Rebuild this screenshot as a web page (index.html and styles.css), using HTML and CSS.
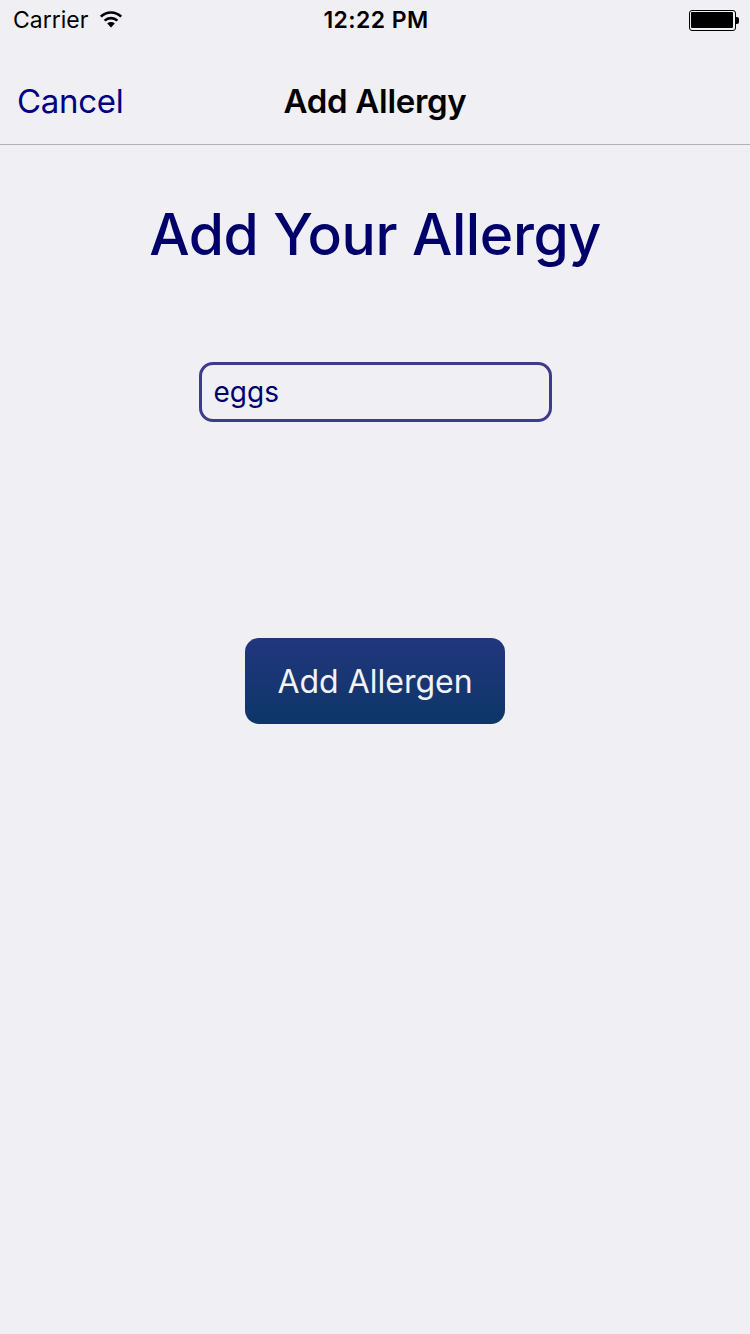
FILE: index.html
```html
<!DOCTYPE html>
<html>
<head>
<meta charset="utf-8">
<link rel="stylesheet" href="styles.css">
</head>
<body>
<div class="screen">
  <div class="status">
    <div class="status-left">
      <span class="carrier">Carrier</span>
      <svg class="wifi" width="24" height="18" viewBox="0 0 24 18">
        <path d="M12 17.5 L8.2 13.4 A5.6 5.6 0 0 1 15.8 13.4 Z" fill="#000"/>
        <path d="M5.6 10.6 A9.4 9.4 0 0 1 18.4 10.6" fill="none" stroke="#000" stroke-width="2.6"/>
        <path d="M1.8 6.6 A14.6 14.6 0 0 1 22.2 6.6" fill="none" stroke="#000" stroke-width="2.6"/>
      </svg>
    </div>
    <div class="time">12:22 PM</div>
    <div class="status-right">
      <div class="battery"><div class="battery-fill"></div></div>
      <div class="battery-nub"></div>
    </div>
  </div>
  <div class="navbar">
    <span class="nav-cancel">Cancel</span>
    <span class="nav-title">Add Allergy</span>
    <span class="nav-spacer"></span>
  </div>
  <main class="content">
    <h1 class="heading">Add Your Allergy</h1>
    <div class="field">eggs</div>
    <button class="add-btn">Add Allergen</button>
  </main>
</div>
</body>
</html>
```
FILE: styles.css
```css
html, body {
  margin: 0;
  padding: 0;
  background: #efeff4;
}
.screen {
  width: 750px;
  height: 1334px;
  background: #efeff4;
  font-family: Inter, "Liberation Sans", sans-serif;
  display: flex;
  flex-direction: column;
}
.status {
  height: 40px;
  display: flex;
  align-items: center;
  justify-content: space-between;
  padding: 0 11px 0 13px;
  color: #000;
}
.status-left {
  display: flex;
  align-items: center;
  gap: 11px;
  width: 200px;
}
.carrier {
  font-size: 23px;
  letter-spacing: 0;
}
.wifi { margin-top: -2px; }
.time {
  font-size: 23px;
  font-weight: 600;
  letter-spacing: 0.4px;
}
.status-right {
  width: 200px;
  display: flex;
  justify-content: flex-end;
  align-items: center;
}
.battery {
  width: 42px;
  height: 16px;
  border: 1.5px solid #000;
  border-radius: 3px;
  padding: 1.5px;
  box-sizing: content-box;
}
.battery-fill {
  width: 100%;
  height: 100%;
  background: #000;
  border-radius: 1px;
}
.battery-nub {
  width: 3px;
  height: 7px;
  background: #000;
  border-radius: 0 2px 2px 0;
}
.navbar {
  height: 105px;
  box-sizing: border-box;
  padding: 18px 17px 0;
  border-bottom: 1px solid #b2b2b2;
  display: flex;
  align-items: center;
  justify-content: space-between;
}
.nav-cancel {
  width: 180px;
  font-size: 33px;
  color: #000080;
  letter-spacing: -0.3px;
}
.nav-title {
  font-size: 33px;
  font-weight: 600;
  color: #000;
  letter-spacing: -0.3px;
}
.nav-spacer { width: 180px; }
.content {
  display: flex;
  flex-direction: column;
  align-items: center;
}
.heading {
  margin: 54px 0 0;
  font-size: 57px;
  font-weight: 500;
  color: #00006b;
  line-height: 72px;
  letter-spacing: -0.4px;
}
.field {
  margin-top: 91px;
  width: 353px;
  height: 60px;
  box-sizing: border-box;
  border: 3px solid #3c3c8a;
  border-radius: 14px;
  padding: 0 12px;
  display: flex;
  align-items: center;
  font-size: 28px;
  color: #00006b;
}
.add-btn {
  margin-top: 216px;
  width: 260px;
  height: 86px;
  border: none;
  border-radius: 14px;
  background: linear-gradient(#22367e, #0d3667);
  color: #f2f2f7;
  font-family: Inter, "Liberation Sans", sans-serif;
  font-size: 32px;
  font-weight: 400;
}
```
